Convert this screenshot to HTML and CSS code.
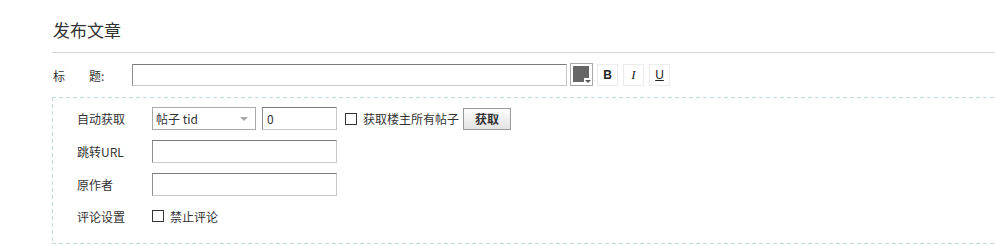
FILE: index.html
```html
<!DOCTYPE html>
<html lang="zh-CN">
<head>
<meta charset="utf-8">
<title>发布文章</title>
<link rel="stylesheet" href="styles.css">
</head>
<body>
<div class="page">
  <div class="header"><h2>发布文章</h2></div>
  <div class="title-row">
    <label class="title-label">标&emsp;&emsp;题:</label>
    <input class="txt title-input" type="text">
    <span class="color-btn"><span class="swatch"></span><span class="notch"></span></span>
    <span class="fmt bold">B</span>
    <span class="fmt ital">I</span>
    <span class="fmt under">U</span>
  </div>
  <div class="box">
    <div class="row">
      <span class="lbl">自动获取</span>
      <span class="sel">帖子 tid</span>
      <input class="txt num" type="text" value="0">
      <span class="chk"></span><span class="chk-text">获取楼主所有帖子</span>
      <span class="btn">获取</span>
    </div>
    <div class="row">
      <span class="lbl">跳转URL</span>
      <input class="txt wide" type="text">
    </div>
    <div class="row">
      <span class="lbl">原作者</span>
      <input class="txt wide" type="text">
    </div>
    <div class="row last">
      <span class="lbl">评论设置</span>
      <span class="chk"></span><span class="chk-text">禁止评论</span>
    </div>
  </div>
</div>
</body>
</html>
```
FILE: styles.css
```css
html, body {
  margin: 0;
  padding: 0;
  background: #fff;
}
body {
  font-family: "Noto Sans CJK SC", "Liberation Sans", sans-serif;
  font-size: 12px;
  color: #333;
  overflow: hidden;
}
.page {
  padding-left: 52px;
}
.header {
  height: 53px;
  box-sizing: border-box;
  border-bottom: 1px solid #d2d2d2;
}
.header h2 {
  margin: 0;
  padding: 20px 0 0 1px;
  font-size: 17px;
  line-height: 20px;
  font-weight: normal;
  color: #333;
}
.title-row {
  display: flex;
  align-items: center;
  height: 23px;
  margin-top: 10px;
}
.title-label {
  width: 80px;
  padding-left: 1px;
  box-sizing: border-box;
  line-height: 16px;
  padding-top: 2px;
}
.txt {
  box-sizing: border-box;
  height: 22px;
  margin: 0;
  padding: 0 4px;
  border: 1px solid #c8c8c8;
  border-top-color: #7b7b7b;
  border-left-color: #8e8e8e;
  font-family: "Noto Sans CJK SC", "Liberation Sans", sans-serif;
  font-size: 12px;
  color: #333;
  outline: none;
  background: #fff;
}
.title-input {
  width: 435px;
  height: 22px;
}
.color-btn {
  position: relative;
  box-sizing: border-box;
  width: 23px;
  height: 23px;
  margin-left: 3px;
  border: 1px solid #a9a9a9;
  padding: 2px;
  background: #fff;
}
.swatch {
  display: block;
  width: 16px;
  height: 16px;
  background: #666;
}
.notch {
  position: absolute;
  right: 1px;
  bottom: 1px;
  width: 7px;
  height: 6px;
  background: #fff;
}
.notch::after {
  content: "";
  position: absolute;
  left: 1px;
  top: 2px;
  border-left: 3px solid transparent;
  border-right: 3px solid transparent;
  border-top: 3px solid #555;
}
.fmt {
  box-sizing: border-box;
  width: 21px;
  height: 22px;
  margin-left: 5px;
  border: 1px solid #ececec;
  display: flex;
  align-items: center;
  justify-content: center;
  font-family: "Liberation Sans", sans-serif;
  font-size: 12px;
  color: #222;
}
.fmt.bold { margin-left: 4px; font-weight: bold; }
.ital { font-style: italic; font-family: "Liberation Serif", serif; font-size: 13px; }
.under { text-decoration: underline; }
.box {
  margin-top: 11px;
  padding: 10px 0 18px 25px;
  background-image:
    repeating-linear-gradient(90deg, #bcd9e6 0 4px, transparent 4px 7px),
    repeating-linear-gradient(90deg, #bcd9e6 0 4px, transparent 4px 7px),
    repeating-linear-gradient(180deg, #bcd9e6 0 4px, transparent 4px 7px);
  background-size: 100% 1px, 100% 1px, 1px 100%;
  background-position: 0 0, 0 100%, 0 0;
  background-repeat: no-repeat;
}
.row {
  display: flex;
  align-items: center;
  height: 23px;
  margin-bottom: 10px;
}
.row.last {
  height: 20px;
  margin-bottom: 0;
}
.lbl {
  width: 75px;
  flex: none;
}
.sel {
  position: relative;
  box-sizing: border-box;
  width: 104px;
  height: 23px;
  border: 1px solid #a9a9a9;
  padding-left: 3px;
  line-height: 21px;
}
.sel::after {
  content: "";
  position: absolute;
  right: 7px;
  top: 9px;
  border-left: 4px solid transparent;
  border-right: 4px solid transparent;
  border-top: 4px solid #a8a8a8;
}
.num {
  width: 75px;
  height: 23px;
  margin-left: 6px;
}
.wide {
  width: 185px;
  height: 23px;
}
.chk {
  box-sizing: border-box;
  width: 12px;
  height: 12px;
  border: 1px solid #333;
  flex: none;
}
.num + .chk { margin-left: 8px; }
.chk-text {
  margin-left: 6px;
}
.btn {
  box-sizing: border-box;
  width: 48px;
  height: 22px;
  margin-left: 4px;
  border: 1px solid #9a9a9a;
  background: linear-gradient(#fdfdfd, #e3e3e3);
  display: flex;
  align-items: center;
  justify-content: center;
  font-weight: bold;
  color: #333;
}
```
